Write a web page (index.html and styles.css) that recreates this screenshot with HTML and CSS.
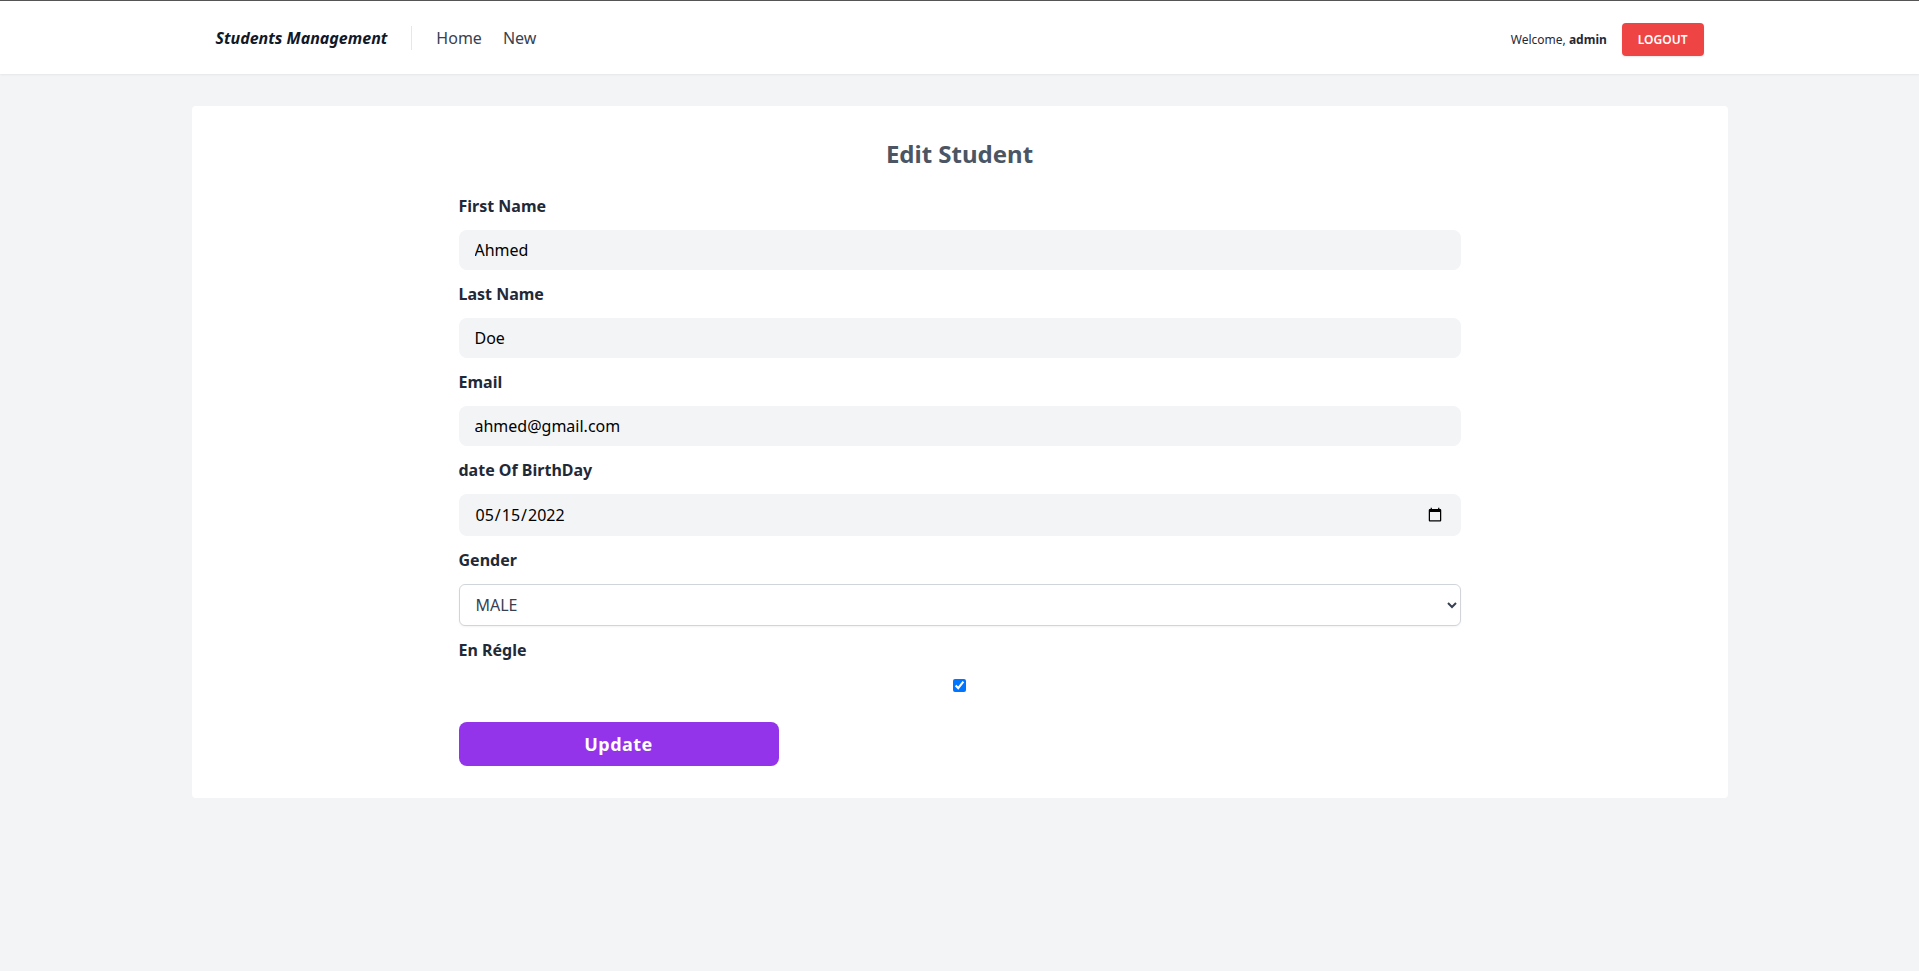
FILE: index.html
```html
<!DOCTYPE html>
<html lang="en">
<head>
<meta charset="utf-8">
<title>Students Management</title>
<link rel="stylesheet" href="styles.css">
</head>
<body>
<header class="header">
  <div class="container header-inner">
    <a class="brand" href="#">Students Management</a>
    <nav class="nav">
      <a href="#">Home</a>
      <a href="#">New</a>
    </nav>
    <div class="account">
      <p class="welcome">Welcome, <strong>admin</strong></p>
      <button class="logout" type="button">LOGOUT</button>
    </div>
  </div>
</header>
<main class="container card">
  <h1 class="title">Edit Student</h1>
  <form class="form">
    <label class="label" for="first">First Name</label>
    <input class="field" id="first" type="text" value="Ahmed">
    <label class="label" for="last">Last Name</label>
    <input class="field" id="last" type="text" value="Doe">
    <label class="label" for="email">Email</label>
    <input class="field" id="email" type="email" value="ahmed@gmail.com">
    <label class="label" for="birth">date Of BirthDay</label>
    <input class="field" id="birth" type="date" value="2022-05-15">
    <label class="label" for="gender">Gender</label>
    <select class="select" id="gender">
      <option selected>MALE</option>
      <option>FEMALE</option>
    </select>
    <label class="label" for="regle">En Régle</label>
    <input class="check" id="regle" type="checkbox" checked>
    <button class="update" type="submit">Update</button>
  </form>
</main>
</body>
</html>
```
FILE: styles.css
```css
* {
  box-sizing: border-box;
  margin: 0;
}

body {
  font-family: "Noto Sans", sans-serif;
  font-size: 16px;
  line-height: 24px;
  color: #111827;
  background: #f3f4f6;
}

input,
select,
button {
  font: inherit;
  color: inherit;
}

a {
  color: inherit;
  text-decoration: none;
}

.container {
  width: 100%;
  max-width: 1536px;
  margin: 0 auto;
}

.header {
  background: #fff;
  border-top: 1px solid #555;
  box-shadow: 0 1px 2px rgba(0, 0, 0, 0.06);
}

.header-inner {
  display: flex;
  align-items: center;
  height: 73px;
  padding: 0 24px;
}

.brand {
  padding-right: 24px;
  border-right: 1px solid #e5e7eb;
  font-weight: 700;
  font-style: italic;
}

.nav {
  display: flex;
  gap: 21px;
  margin-left: 24px;
  color: #374151;
}

.account {
  display: flex;
  align-items: center;
  gap: 15px;
  margin-left: auto;
  padding-top: 4px;
  color: #1f2937;
  font-size: 12px;
  line-height: 17px;
}

.logout {
  padding: 8px 16px;
  border: 0;
  border-radius: 4px;
  background: #ef4444;
  box-shadow: 0 1px 2px rgba(0, 0, 0, 0.1);
  color: #fff;
  font-weight: 600;
}

.card {
  margin-top: 32px;
  padding: 32px 0;
  border-radius: 4px;
  background: #fff;
}

.title {
  color: #4b5563;
  font-size: 24px;
  line-height: 32px;
  text-align: center;
}

.form {
  display: flex;
  flex-direction: column;
  width: 1002px;
  max-width: 100%;
  margin: 24px auto 0;
}

.label {
  margin-bottom: 12px;
  color: #1f2937;
  font-weight: 700;
}

.field {
  margin-bottom: 12px;
  padding: 8px 16px;
  border: 0;
  border-radius: 8px;
  background: #f3f4f6;
  color: #000;
}

.select {
  height: 42px;
  margin-bottom: 12px;
  padding: 8px 12px;
  border: 1px solid #d1d5db;
  border-radius: 6px;
  background: #fff;
  box-shadow: 0 1px 2px rgba(0, 0, 0, 0.05);
  color: #374151;
}

.check {
  align-self: center;
  width: 13px;
  height: 13px;
  margin: 5px 0 30px;
}

.update {
  width: 320px;
  max-width: 100%;
  padding: 8px;
  border: 0;
  border-radius: 8px;
  background: #9333ea;
  color: #fff;
  font-size: 18px;
  line-height: 28px;
  font-weight: 700;
  letter-spacing: 0.025em;
}
```
